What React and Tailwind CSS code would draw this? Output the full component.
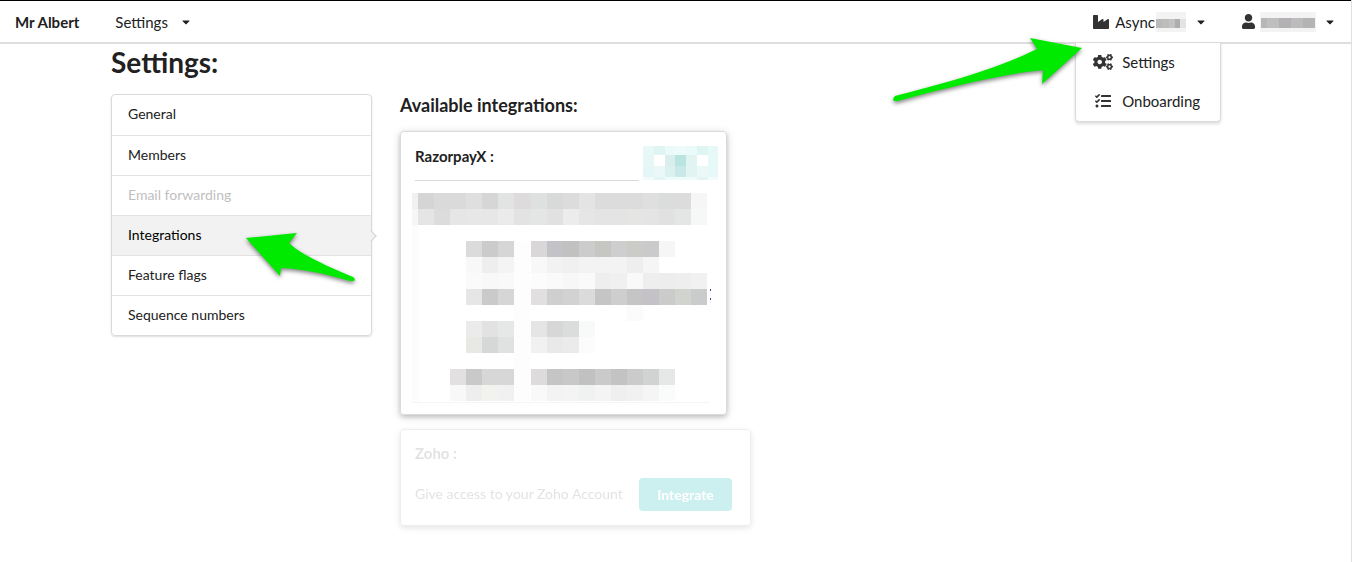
import { FaIndustry, FaCogs, FaTasks, FaUser, FaCaretDown } from "react-icons/fa";

const MENU = [
  { label: "General" },
  { label: "Members" },
  { label: "Email forwarding", disabled: true },
  { label: "Integrations", active: true },
  { label: "Feature flags" },
  { label: "Sequence numbers" },
];

// Each row: [y, [[firstColumn, colours...], ...]]; columns are 16 units wide.
const DETAIL_ROWS = [
  [0, [[0, "#d5d5d5", "#dadada", "#dadada", "#dfdfdf", "#d6d6d6", "#e2e4e3", "#dddbdb", "#dfe1e0", "#d7dad9", "#dcdcdc", "#e4e4e4", "#dcdcdc", "#dcdcdc", "#dcdcdc", "#dfdfdf", "#dbdddc", "#dcdcdc", "#f6f6f6"]]],
  [16, [[0, "#e5e5e5", "#dcdcdc", "#e6e6e6", "#e7e7e7", "#e7e7e7", "#ebebeb", "#e3e3e3", "#e4e6e5", "#e1e1e1", "#ececec", "#e6e6e6", "#e4e4e4", "#e4e4e4", "#e5e5e3", "#e4e4e4", "#e1e1e1", "#e3e6e5", "#f6f8f7"]]],
  [48, [[3, "#dbdbdb", "#cbcbcb", "#d6d6d6"], [7, "#dad7d9", "#c3c3c7", "#c1c1c1", "#cccccc", "#c6c6c2", "#cecece", "#cbcbc8", "#cacaca", "#f6f6f6"]]],
  [64, [[3, "#f8f8f8", "#eeeeee", "#f4f4f4"], [7, "#f8f8f8", "#f2f2f2", "#f0f0f0", "#f3f3f3", "#f3f3f3", "#f3f3f3", "#eeeeee", "#f5f5f5"]]],
  [80, [[3, "#fafafa", "#f8f8f8", "#f9f9f9"], [7, "#fcfcfc", "#fafafa", "#f7f7f7", "#fafafa", "#eeeeee", "#f0f0f0", "#f9f9f9", "#eeeeee", "#ededed", "#eeeeee", "#f1f1f1"]]],
  [96, [[3, "#e6e6e6", "#cacaca", "#d6d6d6"], [7, "#e2dfe1", "#cfcfcf", "#d2d2d2", "#dbdbdb", "#c5c5c5", "#cecece", "#c5c5c5", "#c5c2c7", "#cbcbcb", "#d0d3ce", "#cacccb"]]],
  [112, [[13, "#fbfbfb"]]],
  [128, [[3, "#ebebeb", "#e2e2e2", "#e5e8e7"], [7, "#e5e5e5", "#d7d7d7", "#dadddc", "#f7faf9"]]],
  [144, [[3, "#e8e8e5", "#d5d8d7", "#dfe2e1"], [7, "#f1f1f1", "#e9e9e9", "#ebebeb", "#fcfcfc"]]],
  [176, [[2, "#e3e0e2", "#c9c9c9", "#d7d7d7", "#d7d7d7"], [7, "#dedbdd", "#c5c5c5", "#c8c8c8", "#c1c1c1", "#cacaca", "#c3c3c3", "#cbcbcb", "#d0d3d2", "#e5e8e7"]]],
  [192, [[2, "#f8f8f8", "#eeeeee", "#f2f2ef", "#f1f1f1"], [7, "#f9f9f9", "#f3f3f3", "#f4f4f4", "#eff2f1", "#f4f4f4", "#efefef", "#f1f1f1", "#f5f5f5", "#f9fcfb"]]],
];

function Cells({ rows, w, h }) {
  return rows.map(([y, runs]) =>
    runs.map(([start, ...colours]) =>
      colours.map((fill, i) => (
        <rect key={`${y}-${start}-${i}`} x={(start + i) * w} y={y} width={w} height={h} fill={fill} />
      ))
    )
  );
}

function DetailMosaic() {
  return (
    <svg className="-ml-1 mt-3 block h-[212px] w-[302px] shrink-0" viewBox="-7 0 302 212" shapeRendering="crispEdges" aria-hidden="true">
      <rect x="-6" y="0" width="6" height="16" fill="#f1f1f1" />
      <rect x="-6" y="16" width="6" height="16" fill="#f6f6f6" />
      <rect x="-6" y="32" width="6" height="177" fill="#fcfcfc" />
      <rect x="-6" y="209" width="298" height="1" fill="#f5f5f5" />
      <rect x="96" y="48" width="16" height="160" fill="#fdfdfd" />
      <Cells rows={DETAIL_ROWS} w={16.08} h={16} />
      <rect x="292" y="96" width="1" height="2" fill="#2f4a80" />
      <rect x="292" y="105" width="1" height="2" fill="#2f4a80" />
    </svg>
  );
}

const BADGE_ROWS = [
  [0, [[0, "#e6f8f7", "#def5f4", "#e9faf9", "#edfbfa", "#e9faf9", "#def5f4", "#e6f8f7"]]],
  [9, [[0, "#e6f7f6", "#ffffff", "#daefed", "#b9e4e0", "#e1f4f2", "#ffffff", "#e6f8f7"]]],
  [20, [[0, "#e4f6f5", "#eaf8f8", "#daf1ef", "#c8e9e8", "#e1f4f2", "#eaf8f8", "#e6f8f7"]]],
  [31, [[0, "#f2fbfb", "#e4f5f8", "#effafa", "#effafa", "#effafa", "#e2f5f3", "#f2fbfb"]]],
];

function BadgeMosaic() {
  return (
    <svg className="block h-[34px] w-[75px] shrink-0" viewBox="0 0 75 34" shapeRendering="crispEdges" aria-hidden="true">
      <Cells rows={BADGE_ROWS} w={10.8} h={11} />
    </svg>
  );
}

function Arrow({ className, viewBox, d }) {
  return (
    <svg className={`pointer-events-none absolute z-20 overflow-visible drop-shadow-[0_2px_2px_rgba(0,0,0,0.5)] ${className}`} viewBox={viewBox} aria-hidden="true">
      <path d={d} fill="#00ea00" />
    </svg>
  );
}

function Nav() {
  return (
    <header className="flex h-11 items-center justify-between border-t border-b-2 border-t-black border-b-[#dededf] pl-[15px] pr-[15px]">
      <nav className="flex items-center gap-9">
        <a href="#home" className="font-bold">Mr Albert</a>
        <button type="button" className="flex items-center gap-3">
          Settings
          <FaCaretDown className="size-3" />
        </button>
      </nav>
      <div className="flex items-center gap-[34px]">
        <div className="relative">
          <button type="button" className="flex items-center">
            <FaIndustry className="mr-1.5 size-4 text-[#333]" />
            Async
            <svg className="block h-5 w-8" viewBox="0 0 32 20" shapeRendering="crispEdges" aria-hidden="true">
              <rect x="1" y="0" width="30" height="20" fill="#f3f3f3" />
              <rect x="1" y="7" width="6" height="9" fill="#b9b9b9" />
              <rect x="7" y="7" width="7" height="9" fill="#bdbdbd" />
              <rect x="14" y="7" width="6" height="9" fill="#c2c2c2" />
              <rect x="20" y="7" width="5" height="9" fill="#adadad" />
              <rect x="25" y="7" width="6" height="9" fill="#e3e3e3" />
            </svg>
            <FaCaretDown className="ml-2 size-3" />
          </button>
          <div className="absolute -left-[18px] top-[30px] z-10 w-[146px] rounded-b border border-[#dadadb] bg-white shadow-[0_2px_3px_rgba(34,36,38,0.15)]">
            <a href="#settings" className="flex h-[39px] items-center gap-[9px] pl-[17px]">
              <FaCogs className="size-5 text-[#333]" />
              Settings
            </a>
            <a href="#onboarding" className="flex h-[39px] items-center gap-[9px] pl-[17px]">
              <span className="flex w-5 justify-center"><FaTasks className="size-4 text-[#333]" /></span>
              Onboarding
            </a>
          </div>
        </div>
        <button type="button" aria-label="Account" className="flex items-center">
          <FaUser className="mr-1 size-[15px] text-[#333]" />
          <svg className="block h-5 w-14" viewBox="0 0 56 20" shapeRendering="crispEdges" aria-hidden="true">
            <rect width="56" height="20" fill="#f3f3f3" />
            <rect x="1" y="6" width="6" height="10" fill="#b7b7b7" />
            <rect x="7" y="6" width="12" height="10" fill="#bfbfbf" />
            <rect x="19" y="6" width="12" height="10" fill="#b3b1b3" />
            <rect x="31" y="6" width="12" height="10" fill="#bcbcbc" />
            <rect x="43" y="6" width="12" height="10" fill="#b4b4b4" />
          </svg>
          <FaCaretDown className="ml-2 size-3" />
        </button>
      </div>
    </header>
  );
}

function SideMenu() {
  return (
    <nav className="relative w-[261px] shrink-0 rounded border border-[#dadadb] shadow-[0_1px_2px_rgba(34,36,38,0.15)]">
      {MENU.map(({ label, disabled, active }, i) => (
        <a
          key={label}
          href={`#${label.toLowerCase().replace(" ", "-")}`}
          aria-disabled={disabled}
          aria-current={active ? "page" : undefined}
          className={`relative flex h-10 items-center pb-0.5 pl-4 text-sm ${i ? "border-t border-[#e2e2e2]" : ""} ${disabled ? "text-[#bfbfbf]" : ""} ${active ? "bg-[#f2f2f2] text-black" : ""}`}
        >
          {label}
          {active && <span className="absolute -right-1 top-4 size-2 rotate-45 border-r border-t border-[#d4d4d5] bg-[#f2f2f2]" />}
        </a>
      ))}
      <Arrow
        className="left-[134px] top-[136px] h-[52px] w-[110px]"
        viewBox="0 0 110 52"
        d="M0 7 L51 2 L43 12 C53 22 80 35 107 46 Q110 48 108 50 L104 50 C80 43 58 38 35 37 L34 45 Z"
      />
    </nav>
  );
}

export default function App() {
  return (
    <div className="relative min-h-screen border-r border-[#e0e0e0] bg-white font-[Lato,sans-serif] text-[15px] leading-5 text-[#212121]">
      <Nav />
      <main className="pl-[111px] pr-4 pb-9">
        <h1 className="pb-1.5 pt-0.5 text-[28px] font-bold leading-8">Settings:</h1>
        <div className="mt-[10px] flex items-start gap-7">
          <SideMenu />
          <section>
            <h2 className="text-lg font-bold leading-[22px]">Available integrations:</h2>
            <article className="mt-[15px] flex w-[327px] flex-col rounded border border-[#dadadb] pb-[9px] pl-[14px] pr-2 pt-[14px] shadow-[0_2px_4px_rgba(34,36,38,0.2),0_2px_10px_rgba(34,36,38,0.15)]">
              <div className="flex items-start gap-1">
                <h3 className="h-[35px] w-56 border-b border-[#dadadb] text-[15px] font-bold leading-5">RazorpayX :</h3>
                <BadgeMosaic />
              </div>
              <DetailMosaic />
            </article>
            <article className="mt-[14px] w-[351px] rounded border border-[#dadadb] px-[14px] pb-[14px] pt-[13px] opacity-45 shadow-[0_2px_4px_rgba(34,36,38,0.12),0_2px_10px_rgba(34,36,38,0.15)]">
              <h3 className="text-[15px] font-bold leading-5 text-[#c0c0c0]">Zoho :</h3>
              <div className="mt-[15px] flex items-center justify-between pr-1">
                <p className="pb-0.5 text-sm text-[#c0c0c0]">Give access to your Zoho Account</p>
                <button type="button" className="h-[33px] w-[93px] rounded bg-[#90e0dc] text-sm font-bold text-white">Integrate</button>
              </div>
            </article>
          </section>
        </div>
      </main>
      <Arrow
        className="right-[268px] top-[37px] h-[66px] w-[190px]"
        viewBox="0 0 190 66"
        d="M189 11 L137 1 L144 12 C100 34 50 46 2 59 Q-1 62 1 64 L5 64 C60 49 110 37 150 33 L149 47 Z"
      />
    </div>
  );
}
